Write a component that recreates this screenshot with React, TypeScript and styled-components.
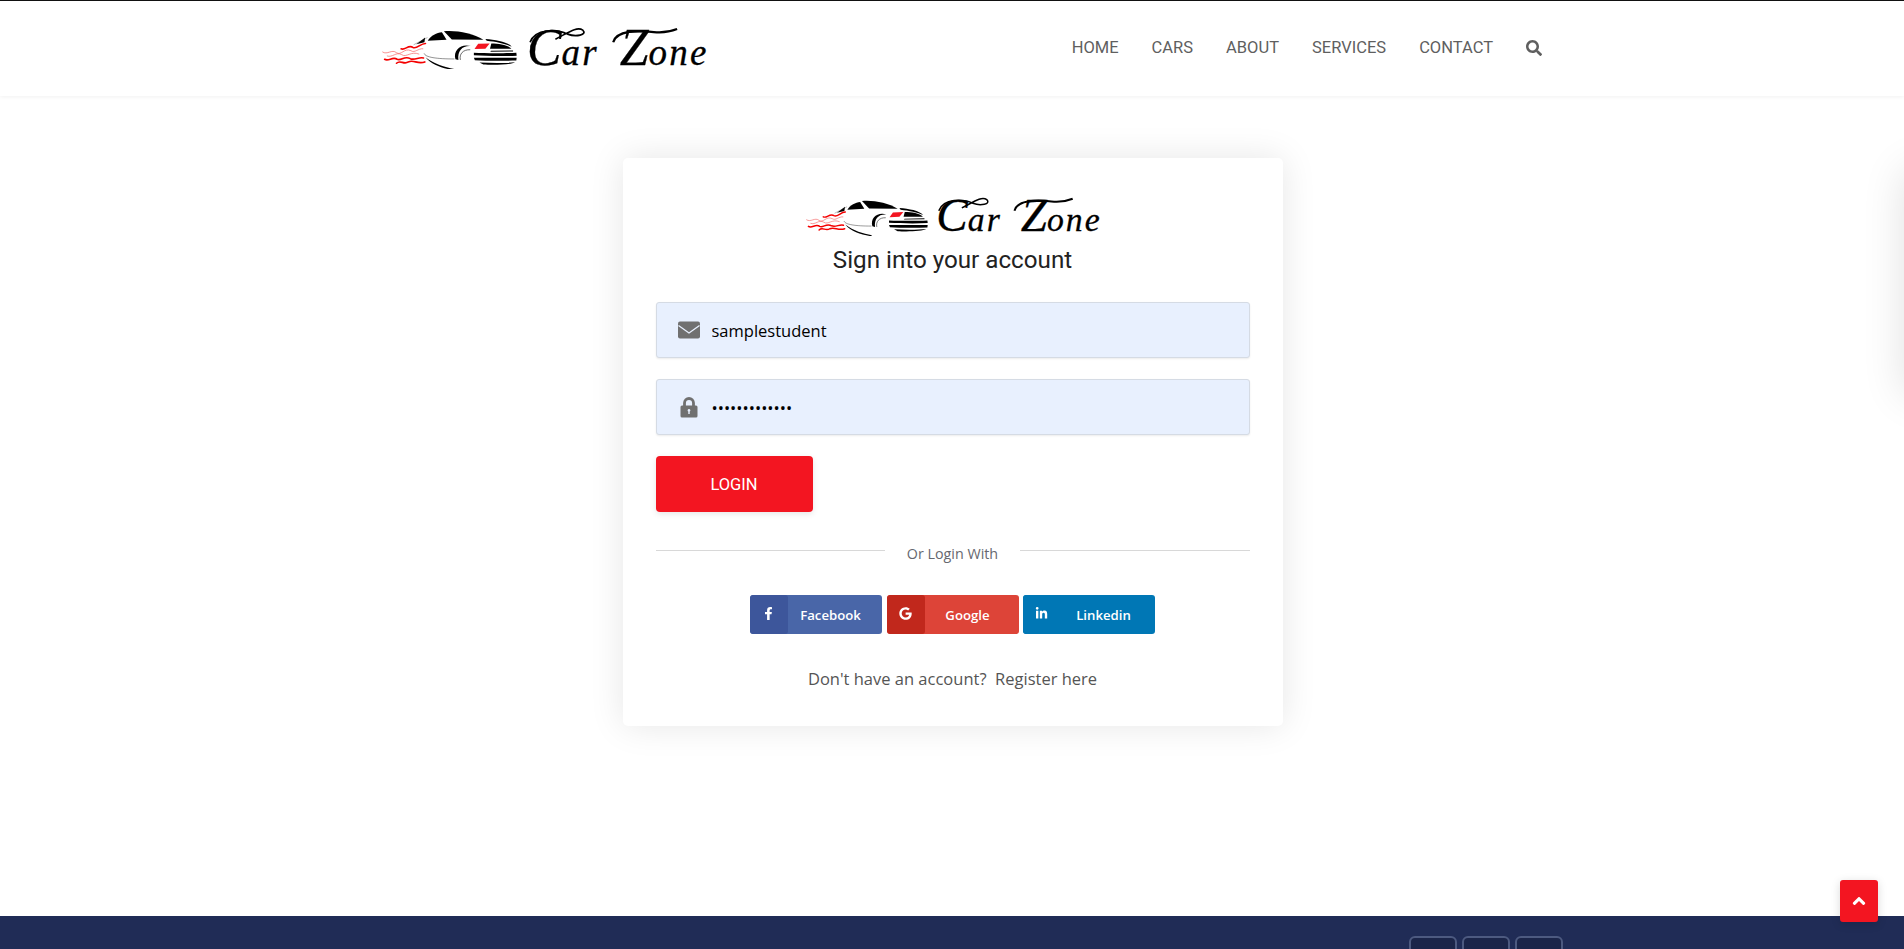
import React from 'react'
import styled, { createGlobalStyle } from 'styled-components'
import { FaSearch, FaFacebookF, FaGoogle, FaLinkedinIn, FaAngleUp } from 'react-icons/fa'

const GlobalStyle = createGlobalStyle`
  html, body {
    margin: 0;
    height: 949px;
    overflow: hidden;
    background: #fff;
    font-family: 'Open Sans', sans-serif;
  }
  * { box-sizing: border-box; }
`

const Page = styled.div`
  height: 949px;
  display: flex;
  flex-direction: column;
`

const Header = styled.header`
  height: 96px;
  flex: none;
  border-top: 1px solid #111;
  box-shadow: 0 1px 4px rgba(0, 0, 0, 0.06);
  display: flex;
  align-items: center;
  justify-content: space-between;
  padding: 0 362px 2px 382px;
`

const LogoWrap = styled.a<{ $gap: number }>`
  display: flex;
  align-items: center;
  gap: ${(p) => p.$gap}px;
`

const CarSvg = styled.svg`
  flex: none;
  margin-top: 3px;
`

const LogoText = styled.span<{ $size: number }>`
  position: relative;
  display: block;
  font-family: 'Liberation Serif', serif;
  font-style: italic;
  font-size: ${(p) => p.$size}px;
  line-height: 1;
  letter-spacing: 0.06em;
  color: #000;
  white-space: nowrap;
  -webkit-text-stroke: 0.3px #000;
`

const LogoInitial = styled.span<{ $spaced?: boolean }>`
  font-size: 1.4em;
  letter-spacing: 0;
  margin-left: ${(p) => (p.$spaced ? '0.4em' : '0')};
`

const LogoSwash = styled.svg`
  position: absolute;
  left: 0;
  top: 3px;
  width: 100%;
  pointer-events: none;
`

const Nav = styled.nav`
  display: flex;
  align-items: center;
  gap: 33px;
`

const NavLink = styled.a`
  font-family: Roboto, sans-serif;
  font-size: 16.5px;
  color: #5f5f5f;
  text-transform: uppercase;
`

const SearchIcon = styled(FaSearch)`
  width: 16px;
  height: 16px;
  color: #5f5f5f;
`

const Main = styled.main`
  flex: 1;
  display: flex;
  justify-content: center;
  padding: 62px 0 0 1px;
`

const Card = styled.section`
  width: 660px;
  height: 568px;
  background: #fff;
  border-radius: 5px;
  box-shadow: 0 0 35px rgba(0, 0, 0, 0.1);
  padding: 40px 33px 36px;
  display: flex;
  flex-direction: column;
`

const CardLogo = styled.div`
  height: 36px;
  padding-left: 3px;
  display: flex;
  justify-content: center;
`

const Title = styled.h1`
  margin: 11px 0 27px;
  font-family: Roboto, sans-serif;
  font-size: 24.2px;
  font-weight: 400;
  line-height: 30px;
  color: #222;
  text-align: center;
`

const Field = styled.label`
  height: 56px;
  margin-bottom: 21px;
  display: flex;
  align-items: center;
  gap: 12px;
  padding-left: 21px;
  background: #e8f0fe;
  border: 1px solid #d5dbe4;
  border-radius: 3px;
  box-shadow: 0 1px 2px rgba(0, 0, 0, 0.08);
`

const FieldIcon = styled.svg`
  width: 22px;
  height: 22px;
  flex: none;
`

const FieldInput = styled.input`
  flex: 1;
  border: 0;
  padding: 0;
  outline: 0;
  background: transparent;
  font-family: 'Open Sans', sans-serif;
  font-size: 16.5px;
  color: #000;
`

const LoginButton = styled.button`
  width: 157px;
  height: 56px;
  border: 0;
  border-radius: 4px;
  background: #f31521;
  box-shadow: 0 2px 6px rgba(0, 0, 0, 0.1);
  font-family: Roboto, sans-serif;
  font-size: 16.5px;
  color: #fff;
  text-transform: uppercase;
`

const Divider = styled.div`
  margin-top: 32px;
  display: flex;
  align-items: flex-start;
  &::before,
  &::after {
    content: '';
    flex: 1;
    height: 1px;
    margin-top: 6px;
    background: #d8d8d8;
  }
`

const DividerText = styled.span`
  padding: 0 22px;
  font-size: 14.3px;
  line-height: 20px;
  color: #66686f;
`

const SocialRow = styled.div`
  margin-top: 31px;
  display: flex;
  justify-content: center;
  padding-right: 1px;
`

const SocialButton = styled.a<{ $bg: string; $iconBg: string; $gap: number }>`
  width: 132px;
  height: 39px;
  margin-right: ${(p) => p.$gap}px;
  display: flex;
  align-items: center;
  background: ${(p) => p.$bg};
  border-radius: 3px;
  overflow: hidden;
  color: #fff;
  font-size: 13.2px;
  font-weight: 600;
  & > span:first-child {
    width: 38px;
    height: 100%;
    background: ${(p) => p.$iconBg};
    display: flex;
    align-items: center;
    justify-content: center;
    padding-bottom: 3px;
    font-size: 13px;
    border-radius: 3px;
  }
`

const SocialLabel = styled.span`
  flex: 1;
  text-align: center;
  padding-right: 8px;
`

const RegisterLine = styled.p`
  margin: 34px 0 0;
  font-size: 16.5px;
  line-height: 22px;
  color: #555;
  text-align: center;
  white-space: pre;
`

const Footer = styled.footer`
  height: 33px;
  flex: none;
  background: #202c56;
  overflow: hidden;
  display: flex;
  justify-content: flex-end;
  gap: 5px;
  padding: 20px 341px 0 0;
`

const FooterBox = styled.a`
  width: 48px;
  height: 48px;
  flex: none;
  background: #1b2549;
  border: 2px solid #4d5a80;
  border-radius: 6px;
`

const ScrollTop = styled.a`
  position: fixed;
  left: 1840px;
  top: 880px;
  width: 38px;
  height: 42px;
  border-radius: 3px;
  background: #f31521;
  box-shadow: 0 2px 10px rgba(0, 0, 0, 0.15);
  color: #fff;
  display: flex;
  align-items: center;
  justify-content: center;
  font-size: 20px;
`

const SidePanel = styled.div`
  position: fixed;
  left: 1904px;
  top: 170px;
  width: 200px;
  height: 225px;
  box-shadow: 0 0 40px rgba(0, 0, 0, 0.12);
`

const CarMark: React.FC<{ width: number }> = ({ width }) => (
  <CarSvg width={width} viewBox="4 12 410 124" aria-hidden="true">
    <g fill="#000">
      <path d="M192 19 C228 15 280 25 312 45 L216 44 Z" />
      <path d="M143 48 C153 31 170 24 186 22 L200 45 Z" />
      <path d="M108 58 L135 38 L133 52 Z" />
      <path d="M318 42 C350 45 385 50 398 66 C380 57 350 51 322 48 Z" />
      <path d="M336 56 C360 56 385 60 397 72 L332 72 Z" />
      <path d="M335 78 L402 77 L402 80 L333 81 Z" />
      <path d="M283 84 C320 86 380 86 412 84 L413 93 C370 95 320 94 283 92 Z" />
      <path d="M283 99 L413 99 L412 108 C370 109 320 109 286 107 Z" />
      <path d="M300 114 C340 116 380 116 408 113 C398 121 340 122 312 120 Z" />
      <path d="M136 98 C165 120 195 128 226 134 L222 137 C190 132 155 122 136 98 Z" />
      <path d="M227 104 C219 74 246 55 274 64 C248 62 233 78 236 106 Z" />
    </g>
    <g fill="none" stroke="#222">
      <path d="M242 106 C238 88 250 74 272 75" strokeWidth="2" />
      <path d="M132 86 C135 98 170 103 224 103" strokeWidth="1.5" />
      <path d="M100 60 C118 50 128 46 142 38" strokeWidth="1" />
    </g>
    <path d="M285 73 L296 57 L331 56 L318 72 Z" fill="#f31521" />
    <g fill="none" stroke="#f40000" strokeWidth="5" strokeLinecap="round" strokeLinejoin="round">
      <path d="M62 72 C74 78 84 58 98 68 C110 74 120 56 136 56" />
      <path d="M12 104 C24 112 36 94 50 104 C62 110 72 92 90 102 C104 108 116 96 130 100" />
      <path d="M48 116 C60 104 70 122 84 112 C100 104 112 120 134 112" />
    </g>
    <g fill="none" stroke="#f45a5a" strokeWidth="2" strokeLinecap="round">
      <path d="M6 82 C20 92 34 72 48 84 C62 94 72 68 92 78 C104 86 114 70 128 72" />
      <path d="M20 94 C36 100 46 80 64 90 C78 100 92 78 116 88" />
    </g>
  </CarSvg>
)

const Logo: React.FC<{ carWidth: number; textSize: number; gap: number }> = ({
  carWidth,
  textSize,
  gap
}) => (
  <LogoWrap $gap={gap}>
    <CarMark width={carWidth} />
    <LogoText $size={textSize}>
      <LogoInitial>C</LogoInitial>ar
      <LogoInitial $spaced>Z</LogoInitial>one
      <LogoSwash viewBox="0 0 179 40" fill="none" stroke="#000" strokeWidth="1.6" aria-hidden="true">
        <path d="M3 17 C8 3 30 4 40 9 C48 12 60 10 55 5 C49 1 40 8 28 14" />
        <path d="M85 17 C88 5 110 5 125 7 C134 8 143 6 148 4" strokeWidth="2.2" />
      </LogoSwash>
    </LogoText>
  </LogoWrap>
)

const navItems = ['Home', 'Cars', 'About', 'Services', 'Contact']

const socials = [
  { label: 'Facebook', icon: <FaFacebookF />, bg: '#4966a8', iconBg: '#3d569b', gap: 5 },
  { label: 'Google', icon: <FaGoogle />, bg: '#dd4438', iconBg: '#c1281c', gap: 4 },
  { label: 'Linkedin', icon: <FaLinkedinIn />, bg: '#0077b5', iconBg: '#0077b5', gap: 0 }
]

export default function App() {
  return (
    <Page>
      <GlobalStyle />
      <Header>
        <Logo carWidth={135} textSize={37} gap={10} />
        <Nav>
          {navItems.map((item) => (
            <NavLink key={item}>{item}</NavLink>
          ))}
          <SearchIcon />
        </Nav>
      </Header>
      <Main>
        <Card>
          <CardLogo>
            <Logo carWidth={122} textSize={33.7} gap={8} />
          </CardLogo>
          <Title>Sign into your account</Title>
          <Field>
            <FieldIcon viewBox="0 0 22 22" aria-hidden="true">
              <rect x="0" y="2.5" width="22" height="17" rx="2" fill="#707070" />
              <path d="M0.5 6.5 L11 14 L21.5 6.5" fill="none" stroke="#e8f0fe" strokeWidth="1.3" />
            </FieldIcon>
            <FieldInput readOnly value="samplestudent" />
          </Field>
          <Field>
            <FieldIcon viewBox="0 0 22 22" aria-hidden="true">
              <path d="M6.5 10 V7 a4.5 4.5 0 0 1 9 0 V10" fill="none" stroke="#707070" strokeWidth="2.8" />
              <rect x="2.5" y="9.5" width="17" height="12" rx="1.5" fill="#707070" />
              <path d="M11 13 a1.4 1.4 0 0 1 0.7 2.6 V18 h-1.4 v-2.4 A1.4 1.4 0 0 1 11 13 Z" fill="#e8f0fe" />
            </FieldIcon>
            <FieldInput readOnly type="password" value="samplestudent" />
          </Field>
          <LoginButton>Login</LoginButton>
          <Divider>
            <DividerText>Or Login With</DividerText>
          </Divider>
          <SocialRow>
            {socials.map((s) => (
              <SocialButton key={s.label} $bg={s.bg} $iconBg={s.iconBg} $gap={s.gap}>
                <span>{s.icon}</span>
                <SocialLabel>{s.label}</SocialLabel>
              </SocialButton>
            ))}
          </SocialRow>
          <RegisterLine>Don't have an account?  Register here</RegisterLine>
        </Card>
      </Main>
      <Footer>
        <FooterBox />
        <FooterBox />
        <FooterBox />
      </Footer>
      <SidePanel />
      <ScrollTop>
        <FaAngleUp />
      </ScrollTop>
    </Page>
  )
}
